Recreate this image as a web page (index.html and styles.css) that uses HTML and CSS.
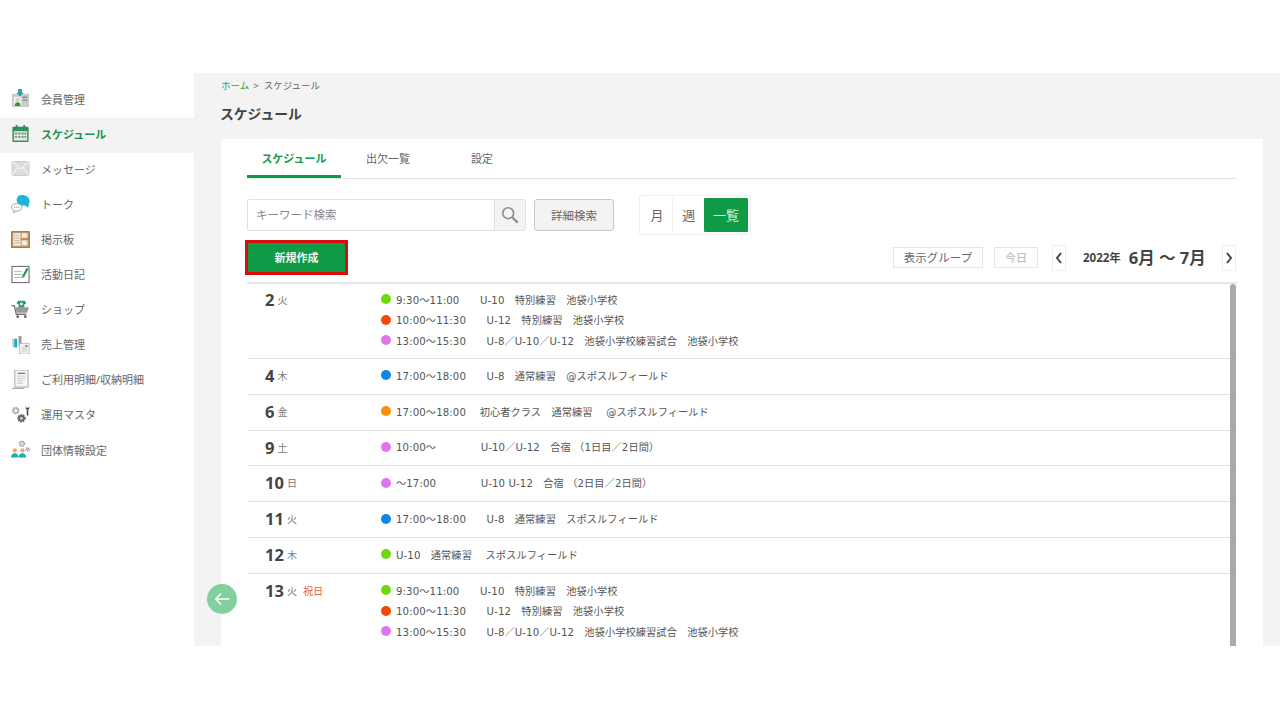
FILE: index.html
```html
<!DOCTYPE html>
<html lang="ja">
<head>
<meta charset="utf-8">
<title>スケジュール</title>
<link rel="stylesheet" href="styles.css">
</head>
<body>
<div class="app">
  <nav class="side">
    <a class="nav"><svg class="ico" viewBox="0 0 20 20"><rect x="1" y="5" width="18" height="14" fill="#c9ccc9"/><rect x="12" y="8" width="5" height="1.5" fill="#888"/><rect x="12" y="11" width="5" height="1.5" fill="#999"/><rect x="3" y="8" width="8" height="10" fill="#eee"/><circle cx="7" cy="11.5" r="2" fill="#e8c8a8"/><path d="M4 18c0-3 1.500-4 3-4s3 1 3 4z" fill="#1f9a4a"/><path d="M7.500 0h4v4h2l-4 4-4-4h2z" fill="#2a9bb5"/></svg><span>会員管理</span></a>
    <a class="nav nav-on"><svg class="ico" viewBox="0 0 20 20"><rect x="1.500" y="3" width="17" height="16" rx="1" fill="#2f8f55"/><rect x="3" y="7.500" width="14" height="10" fill="#dfe8e2"/><path d="M4 9h2.500v2H4zM7.500 9H10v2H7.500zM11 9h2.500v2H11zM14 9h2v2h-2zM4 12.500h2.500v2H4zM7.500 12.500H10v2H7.500zM11 12.500h2.500v2H11zM14 12.500h2v2h-2z" fill="#7c9c88"/><rect x="5" y="1" width="1.800" height="4" fill="#2f8f55"/><rect x="13" y="1" width="1.800" height="4" fill="#2f8f55"/></svg><span>スケジュール</span></a>
    <a class="nav"><svg class="ico" viewBox="0 0 20 20"><rect x="1" y="2.500" width="18" height="15" fill="#dcdcdc" stroke="#bdbdbd" stroke-width=".6"/><path d="M1 2.500l9 8 9-8M1 17.500l6.500-9M19 17.500l-6.500-9" fill="none" stroke="#f4f4f4" stroke-width="1.100"/></svg><span>メッセージ</span></a>
    <a class="nav"><svg class="ico" viewBox="0 0 20 20"><path d="M12 1c4 0 7.500 2.500 7.500 6 0 3-1 5.500-1.500 7.500-1-1.500-2.500-2.500-4.500-2.500-4.500 0-7.500-2-7.500-5.500S8 1 12 1z" fill="#1cb9d4"/><ellipse cx="6" cy="14" rx="5.500" ry="4" fill="#fff" stroke="#888" stroke-width=".8"/><path d="M3 17.500l-.5 2.500 3.500-2" fill="#fff" stroke="#888" stroke-width=".7"/><path d="M3.500 14h1M5.500 14h1M7.500 14h1" stroke="#777" stroke-width="1"/></svg><span>トーク</span></a>
    <a class="nav"><svg class="ico" viewBox="0 0 20 20"><rect x="0" y="1" width="20" height="18" rx=".5" fill="#b07a48"/><rect x="1.500" y="2.500" width="17" height="15" fill="#d9a877"/><rect x="2.500" y="3.500" width="7.500" height="13" fill="#f1ece2"/><path d="M3.500 6h5.500M3.500 8.500h5.500M3.500 11h5.500M3.500 13.500h5.500" stroke="#a9a194" stroke-width=".7"/><rect x="11.500" y="3.500" width="5.500" height="4.500" fill="#f1ece2"/><rect x="11.500" y="11" width="5.500" height="5" fill="#f1ece2"/><rect x="10" y="9" width="9" height="1.200" fill="#b07a48"/></svg><span>掲示板</span></a>
    <a class="nav"><svg class="ico" viewBox="0 0 20 20"><rect x="1" y="1.500" width="18" height="17" fill="#fff" stroke="#777" stroke-width="1.200"/><path d="M3.500 7h8M3.500 10h8M3.500 13h11" stroke="#aaa"/><path d="M12 11l4.500-8 2 1.200-4.500 8-2.300 1z" fill="#1f9a4a"/></svg><span>活動日記</span></a>
    <a class="nav"><svg class="ico" viewBox="0 0 20 20"><path d="M0.500 6h3l2 9h10.500" fill="none" stroke="#777" stroke-width="1.400"/><path d="M4.500 7.500h14.500l-2 6H6z" fill="#999"/><circle cx="7" cy="17.500" r="1.500" fill="#666"/><circle cx="15" cy="17.500" r="1.500" fill="#666"/><path d="M7 1l3-.5 1 1 1-1 3 .5 1 3-2 .5V8H8V4.500L6 4z" fill="#2d9a6a"/><rect x="9.500" y="3" width="3" height="2.500" fill="#dfeee6"/></svg><span>ショップ</span></a>
    <a class="nav"><svg class="ico" viewBox="0 0 20 20"><rect x="1" y="4" width="5" height="9" fill="#c4d6da"/><rect x="3.500" y="4" width="3" height="9" fill="#1cabb8"/><rect x="8" y="1" width="3" height="11" fill="#999"/><rect x="9" y="9" width="10" height="11" fill="#f3f3f3" stroke="#aaa" stroke-width=".7"/><path d="M11 13h6M11 15h6M11 17h6" stroke="#bbb" stroke-width=".7"/><rect x="15" y="10.500" width="2.500" height="2" fill="#888"/></svg><span>売上管理</span></a>
    <a class="nav"><svg class="ico" viewBox="0 0 20 20"><path d="M4 0h14v18H4z" fill="#f7f7f7" stroke="#999" stroke-width=".9"/><path d="M7 3.500h8" stroke="#666" stroke-width="1.200"/><path d="M6.500 6.500h9M6.500 9h9M6.500 11.500h6M6.500 14h6" stroke="#bbb" stroke-width=".8"/><path d="M1 19.500h13" stroke="#aaa" stroke-width="1.500"/></svg><span>ご利用明細/収納明細</span></a>
    <a class="nav"><svg class="ico" viewBox="0 0 20 20"><circle cx="5" cy="6" r="3" fill="#d8d8d8" stroke="#999" stroke-width="1.800" stroke-dasharray="1.500 .8"/><circle cx="5" cy="6" r="1.200" fill="#fff"/><circle cx="11" cy="14" r="3.500" fill="#666" stroke="#666" stroke-width="2" stroke-dasharray="1.500 1"/><circle cx="11" cy="14" r="1.500" fill="#ddd"/><path d="M15.500 1v3l1 1v6h1.800V5l1-1V1l-1 2h-1.800z" fill="#555"/></svg><span>運用マスタ</span></a>
    <a class="nav"><svg class="ico" viewBox="0 0 20 20"><circle cx="11.500" cy="4" r="2.600" fill="#ddd" stroke="#999" stroke-width="1.600" stroke-dasharray="1.300 .8"/><circle cx="17.500" cy="10" r="1.700" fill="#ddd" stroke="#888" stroke-width="1.300" stroke-dasharray="1.200 .7"/><circle cx="4" cy="11" r="2.200" fill="#e8a878"/><path d="M0 18.500c0-3 2-4.500 4-4.500s4 1.500 4 4.500z" fill="#1cabb8"/><circle cx="12" cy="11" r="2.200" fill="#e8a878"/><path d="M8 18.500c0-3 2-4.500 4-4.500s4 1.500 4 4.500z" fill="#1cabb8"/></svg><span>団体情報設定</span></a>
  </nav>
  <main class="main">
    <p class="crumb"><a class="crumb-link">ホーム</a><span class="crumb-sep">&gt;</span>スケジュール</p>
    <h1 class="title">スケジュール</h1>
    <section class="card">
      <div class="tabs">
        <a class="tab tab-on">スケジュール</a>
        <a class="tab">出欠一覧</a>
        <a class="tab">設定</a>
      </div>
      <div class="search-row">
        <div class="search">
          <span class="search-input">キーワード検索</span>
          <span class="search-btn"><svg class="lens" viewBox="0 0 20 20"><circle cx="8" cy="8" r="6" fill="none" stroke="#8e8e8e" stroke-width="1.800"/><path d="M12.500 12.500l6 6" stroke="#8e8e8e" stroke-width="2.600"/></svg></span>
        </div>
        <button class="detail">詳細検索</button>
        <div class="views">
          <span class="view view-line">月</span>
          <span class="view">週</span>
          <span class="view view-on">一覧</span>
        </div>
      </div>
      <div class="tool-row">
        <button class="create">新規作成</button>
        <div class="tools">
          <span class="tool tool-group">表示グループ</span>
          <span class="tool tool-today">今日</span>
          <span class="arrow arrow-prev"><svg viewBox="0 0 8 12" class="chev"><path d="M6 1L2 6l4 5" fill="none" stroke="#444" stroke-width="2"/></svg></span>
          <span class="period"><span class="year">2022年</span><span class="months">6月 〜 7月</span></span>
          <span class="arrow"><svg viewBox="0 0 8 12" class="chev"><path d="M2 1l4 5-4 5" fill="none" stroke="#444" stroke-width="2"/></svg></span>
        </div>
      </div>
      <div class="list">
        <div class="row">
          <div class="date"><b>2</b><span class="wd">火</span></div>
          <div class="events">
            <p class="ev"><i class="dot green"></i>9:30〜11:00　　U-10　特別練習　池袋小学校</p>
            <p class="ev"><i class="dot red"></i>10:00〜11:30　　U-12　特別練習　池袋小学校</p>
            <p class="ev"><i class="dot pink"></i>13:00〜15:30　　U-8／U-10／U-12　池袋小学校練習試合　池袋小学校</p>
          </div>
        </div>
        <div class="row">
          <div class="date"><b>4</b><span class="wd">木</span></div>
          <div class="events"><p class="ev"><i class="dot blue"></i>17:00〜18:00　　U-8　通常練習　@スポスルフィールド</p></div>
        </div>
        <div class="row">
          <div class="date"><b>6</b><span class="wd">金</span></div>
          <div class="events"><p class="ev"><i class="dot orange"></i>17:00〜18:00　 初心者クラス　通常練習　 @スポスルフィールド</p></div>
        </div>
        <div class="row">
          <div class="date"><b>9</b><span class="wd">土</span></div>
          <div class="events"><p class="ev"><i class="dot pink"></i>10:00〜　　　　 U-10／U-12　合宿 （1日目／2日間）</p></div>
        </div>
        <div class="row">
          <div class="date"><b>10</b><span class="wd">日</span></div>
          <div class="events"><p class="ev"><i class="dot pink"></i>〜17:00　　　　 U-10 U-12　合宿 （2日目／2日間）</p></div>
        </div>
        <div class="row">
          <div class="date"><b>11</b><span class="wd">火</span></div>
          <div class="events"><p class="ev"><i class="dot blue"></i>17:00〜18:00　　U-8　通常練習　スポスルフィールド</p></div>
        </div>
        <div class="row">
          <div class="date"><b>12</b><span class="wd">木</span></div>
          <div class="events"><p class="ev"><i class="dot green"></i>U-10　通常練習　 スポスルフィールド</p></div>
        </div>
        <div class="row">
          <div class="date"><b>13</b><span class="wd">火</span><span class="holiday">祝日</span></div>
          <div class="events">
            <p class="ev"><i class="dot green"></i>9:30〜11:00　　U-10　特別練習　池袋小学校</p>
            <p class="ev"><i class="dot red"></i>10:00〜11:30　　U-12　特別練習　池袋小学校</p>
            <p class="ev"><i class="dot pink"></i>13:00〜15:30　　U-8／U-10／U-12　池袋小学校練習試合　池袋小学校</p>
          </div>
        </div>
        <div class="scroll"></div>
      </div>
    </section>
    <a class="back"><svg viewBox="0 0 20 20" class="back-ico"><path d="M18 10H3M9 4l-6 6 6 6" fill="none" stroke="#fff" stroke-width="1.600"/></svg></a>
  </main>
</div>
</body>
</html>
```

FILE: styles.css
```css
* { box-sizing: border-box; }
html, body { margin: 0; padding: 0; background: #fff; }
body {
  padding-top: 73px;
  font-family: "Noto Sans", "Noto Sans CJK JP", sans-serif;
  font-size: 11px;
  color: #555;
}
p, h1 { margin: 0; }
.app { display: flex; height: 573px; overflow: hidden; }

.side { width: 194px; flex: none; padding-top: 9.600px; background: #fff; }
.nav { display: flex; align-items: center; height: 35.100px; padding: 0 0 3px 11px; color: #666; }
.nav span { margin-left: 11px; }
.ico { width: 19px; height: 19px; flex: none; }
.nav-on { background: #f3f3f3; color: #1b9148; font-weight: 700; }

.main { position: relative; flex: 1; min-width: 0; padding: 0 17px 0 27px; background: #f3f3f3; }
.crumb { height: 24px; padding-top: 1px; line-height: 24px; font-size: 9.500px; color: #666; }
.crumb-link { color: #2f9e60; }
.crumb-sep { margin: 0 5px 0 4px; }
.title { height: 42px; margin-left: -1px; padding-top: 5px; line-height: 24px; font-size: 13.800px; font-weight: 700; color: #444; }

.card { height: 507px; padding: 0 26px; background: #fff; overflow: hidden; }
.tabs { display: flex; height: 40px; border-bottom: 1px solid #e3e3e3; }
.tab { width: 94px; height: 39px; line-height: 39px; text-align: center; color: #666; }
.tab-on { border-bottom: 3px solid #0f9a45; color: #0f9a45; font-weight: 700; }

.search-row { display: flex; align-items: center; height: 40px; margin-top: 16px; }
.search { display: flex; width: 279px; height: 32px; border: 1px solid #e2e2e2; border-radius: 2px; }
.search-input { flex: 1; padding-left: 8px; line-height: 29px; font-size: 11.500px; color: #888; }
.search-btn { display: flex; align-items: center; justify-content: center; width: 31px; background: #f3f3f3; border-left: 1px solid #e2e2e2; }
.lens { width: 18px; height: 18px; }
.detail { width: 80px; height: 32px; margin-left: 8px; padding: 0; background: #f3f3f3; border: 1px solid #c9c9c9; border-radius: 3px; font: inherit; font-size: 11.500px; color: #666; }
.views { display: flex; align-items: center; width: 112px; height: 40px; margin-left: 25px; padding: 2px; border: 1px solid #eee; border-radius: 2px; }
.view { width: 32px; height: 34px; line-height: 34px; text-align: center; font-size: 13px; color: #666; }
.view-line { border-right: 1px solid #eee; }
.view-on { width: 45px; margin-left: auto; background: #0f9a45; color: #d8efe0; border-radius: 1px; }

.tool-row { display: flex; align-items: center; height: 35px; margin: 5px 0 7px -2px; }
.create { width: 103px; height: 35px; padding: 0 0 2px; background: #0f9a45; border: 3px solid #d90b0b; color: #eef8f1; font: inherit; font-weight: 700; font-size: 11px; }
.tools { display: flex; align-items: center; margin-left: auto; padding-right: 1px; }
.tool { height: 21px; line-height: 19px; text-align: center; border: 1px solid #e5e5e5; }
.tool-group { width: 90px; font-size: 11.500px; color: #666; }
.tool-today { width: 44px; margin-left: 11px; color: #b5b5b5; }
.arrow { display: flex; align-items: center; justify-content: center; width: 14px; height: 26px; border: 1px solid #eee; }
.arrow-prev { margin-left: 14px; }
.chev { width: 8px; height: 12px; }
.period { display: flex; align-items: center; width: 156px; padding: 0 0 2px 17px; color: #444; font-weight: 700; }
.year { font-size: 11.500px; margin-right: 8px; }
.months { font-size: 16.500px; }

.list { position: relative; height: 401px; border-top: 2px solid #e6e6e6; overflow: hidden; }
.row { display: flex; padding: 7.150px 0; border-bottom: 1px solid #e3e3e3; }
.row:first-child { padding: 6px 0 6.500px; }
.date { display: flex; align-items: center; width: 134px; height: 20.500px; padding-left: 18px; flex: none; }
.date b { font-size: 16.500px; line-height: 20.500px; color: #444; font-weight: 700; }
.wd { margin-left: 3px; font-size: 10px; line-height: 20.500px; color: #777; }
.holiday { margin-left: 6px; font-size: 10.200px; line-height: 20.500px; color: #e8603c; }
.events { margin: -1px 0 1px; }
.ev { display: flex; align-items: center; height: 20.500px; font-family: "DejaVu Sans", "Noto Sans CJK JP", sans-serif; font-size: 10.200px; letter-spacing: .1px; color: #555; white-space: pre; }
.dot { width: 10px; height: 10px; margin-right: 5px; border-radius: 50%; flex: none; }
.green { background: #6ed90c; }
.red { background: #f64608; }
.pink { background: #e273ef; }
.blue { background: #0c87e6; }
.orange { background: #f98e0c; }
.scroll { position: absolute; top: 0; right: 1px; width: 6px; height: 401px; background: #a9a9a9; border-radius: 3px; }

.back { position: absolute; left: 13px; top: 511px; display: flex; align-items: center; justify-content: center; width: 30px; height: 30px; border-radius: 50%; background: #82cfa0; }
.back-ico { width: 18px; height: 18px; }
```
